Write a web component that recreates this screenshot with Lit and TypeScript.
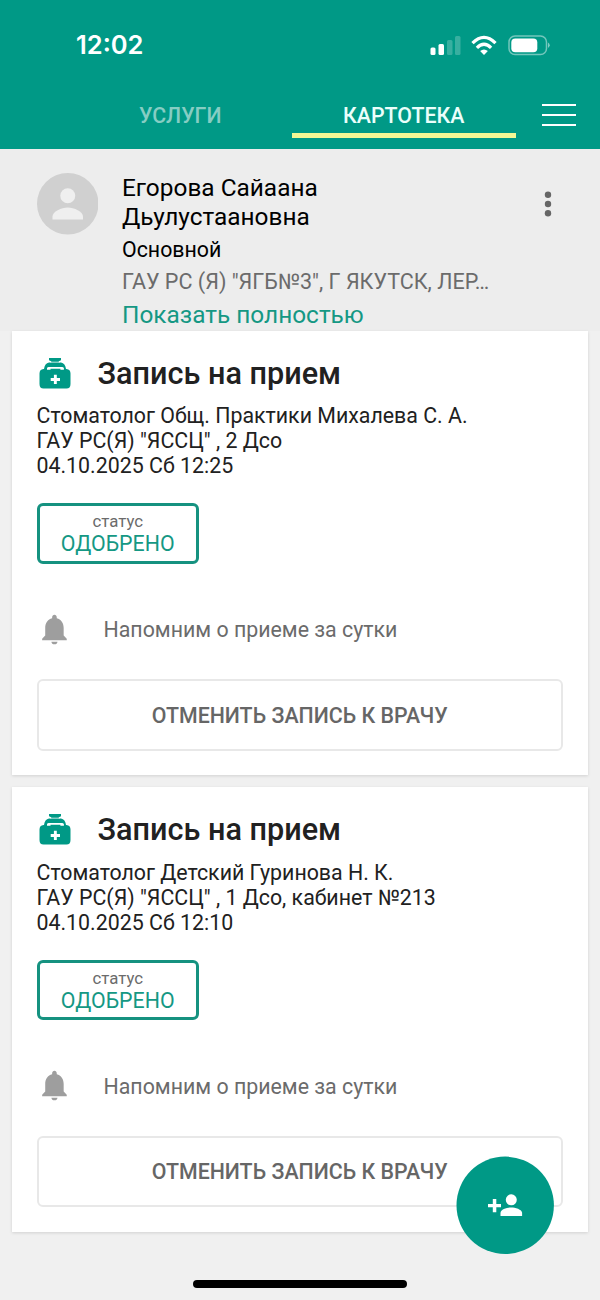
import { LitElement, html, css } from "lit";
import { customElement, property } from "lit/decorators.js";

@customElement("visit-card")
class VisitCard extends LitElement {
  @property() doctor = "";
  @property() place = "";
  @property() time = "";
  static styles = css`
    :host { display: block; box-sizing: border-box; height: 444.3px; padding: 24px 24.5px 0; background: #fff; box-shadow: 0 1px 3px rgba(0,0,0,.13); color: #212121; font-size: 21.35px; }
    .head { display: flex; align-items: center; height: 36px; gap: 25px; }
    .kit { display: block; width: 36px; height: 36px; fill: #009986; }
    .title { padding-top: 2px; font-size: 30.6px; font-weight: 500; line-height: 36px; white-space: nowrap; }
    .details { margin-top: 12.3px; line-height: 25px; white-space: nowrap; }
    .status { display: flex; flex-direction: column; align-items: center; box-sizing: border-box; width: 162.5px; height: 60.5px; margin-top: 25px; padding-top: 5px; border: 3px solid #159280; border-radius: 6px; }
    .label { font-size: 16.8px; line-height: 20px; color: #6b6b6b; }
    .value { line-height: 25px; color: #159884; }
    .remind { display: flex; align-items: center; gap: 49px; height: 36px; margin-top: 48.2px; color: #6b6b6b; white-space: nowrap; }
    .bell { display: block; width: 36.9px; height: 36.9px; fill: #9e9e9e; margin: -1.5px -18.4px 0 -0.5px; }
    .cancel { display: flex; align-items: center; justify-content: center; box-sizing: border-box; width: 526.5px; height: 71.5px; margin-top: 31.5px; padding: 0; border: 2px solid #e8e8e8; border-radius: 6px; background: none; color: #666; font: 500 21.35px Roboto, sans-serif; }
  `;
  render() {
    return html`
      <div class="head">
        <svg class="kit" viewBox="0 0 36 36"><path d="M12 3h12v2.300l-2.200 1v1.300h2.200q4.300.9 5 6.400h.5q4 .3 4 4.500v10.500q0 4.500-4 4.500H6.500q-4 0-4-4.500V18.500q0-4.200 4-4.500h.5q.7-5.500 5-6.400h2.200V6.300L12 5.300z"/><path fill="#fff" d="M13.300 6.700h9.500v.8h-9.500zM10 13.200q.3-1.300 1.800-1.300h13.200q1.500 0 1.900 1.300v1.500h-3.500v-.9H13.500v.9H10zM16.900 19.800h2.900v3.200H23v2.900h-3.200v3.200h-2.900v-3.200h-3.200V23h3.200z"/></svg>
        <div class="title">Запись на прием</div>
      </div>
      <div class="details">
        <div>${this.doctor}</div><div>${this.place}</div><div>${this.time}</div>
      </div>
      <div class="status"><span class="label">статус</span><span class="value">ОДОБРЕНО</span></div>
      <div class="remind">
        <svg class="bell" viewBox="0 0 24 24"><path d="M12 21.700c1.100 0 1.900-.7 2-1.700h-4c.1 1 .9 1.700 2 1.700zM18 16v-5c0-3.070-1.640-5.640-4.500-6.320V4c0-.83-.67-1.500-1.500-1.500s-1.500.67-1.500 1.500v.68C7.630 5.360 6 7.920 6 11v5l-2 2v1h16v-1z"/></svg>
        <span class="remind-text">Напомним о приеме за сутки</span>
      </div>
      <button class="cancel">ОТМЕНИТЬ ЗАПИСЬ К ВРАЧУ</button>
    `;
  }
}

@customElement("app-root")
class AppRoot extends LitElement {
  static styles = css`
    :host { display: block; position: relative; width: 600px; height: 1300px; overflow: hidden; background: #f0f0f0; font-family: Roboto, sans-serif; color: #000; }
    .top { height: 149.300px; background: #009986; }
    .statusbar { display: flex; align-items: center; justify-content: space-between; height: 89px; padding: 0 49px 0 76px; box-sizing: border-box; }
    .clock { color: #fff; font: 600 25.5px/30px Inter, sans-serif; }
    .signals { display: block; width: 121px; height: 22px; }
    .nav { display: flex; align-items: flex-start; }
    .tab { box-sizing: border-box; width: 223.500px; height: 49px; padding-top: 14px; text-align: center; font-size: 21.35px; font-weight: 500; line-height: 25px; color: #86cdc3; }
    .first { margin-left: 68.500px; }
    .active { color: #eafffb; border-bottom: 5px solid #f3f795; }
    .menu { display: block; width: 34px; height: 24px; margin: 14px 0 0 26.500px; }
    .profile { display: flex; height: 181.700px; padding: 24px 48px 0 36.500px; box-sizing: border-box; background: #ededed; }
    .avatar { display: block; width: 61.500px; height: 61.500px; margin-right: 24px; }
    .info { width: 380px; padding-top: 1px; white-space: nowrap; }
    .name { font-size: 24.400px; line-height: 28.500px; }
    .main { font-size: 21.350px; line-height: 25px; margin-top: 6px; }
    .clinic { font-size: 21.540px; line-height: 25px; margin-top: 7px; color: #6b6b6b; }
    .more { font-size: 24.400px; line-height: 28px; margin-top: 6.500px; color: #159884; }
    .dots { display: block; width: 8px; height: 26px; margin: 18px 0 0 auto; }
    .cards { display: flex; flex-direction: column; gap: 12.100px; padding: 0 12px; }
    .fab { position: absolute; left: 456px; top: 1156px; width: 98px; height: 98px; }
    .home { position: absolute; left: 193px; top: 1280px; width: 214px; height: 8px; border-radius: 4px; background: #000; }
  `;
  render() {
    return html`
      <div class="top">
        <div class="statusbar">
          <span class="clock">12:02</span>
          <svg class="signals" viewBox="430 33 121 22">
            <g fill="#fff"><rect x="430.500" y="46.500" width="5" height="7.500" rx="1.500"/><rect x="438.500" y="43" width="5.500" height="11" rx="1.500"/><g opacity=".22"><rect x="447" y="39" width="5.500" height="15" rx="1.500"/><rect x="455" y="35" width="5.500" height="19" rx="1.500"/></g>
            <path d="M484 54l-3.900-3.900q3.900-3.200 7.800 0z"/></g>
            <g fill="none" stroke="#fff" stroke-width="3.300"><path d="M472.500 42.100q11.500-11.600 23 0"/><path d="M476.900 46.800q7.100-7 14.200 0"/></g>
            <rect x="509" y="35" width="37.500" height="18.500" rx="6" fill="none" stroke="#fff" stroke-opacity=".45" stroke-width="1.500"/>
            <rect x="511.300" y="37.500" width="26" height="13.700" rx="4" fill="#fff"/><path d="M548 41.500q3.500 2.700 0 5.400z" fill="#fff" fill-opacity=".5"/>
          </svg>
        </div>
        <div class="nav">
          <div class="tab first">УСЛУГИ</div>
          <div class="tab active">КАРТОТЕКА</div>
          <svg class="menu" viewBox="0 0 34 24"><path d="M0 2h34M0 12h34M0 22h34" stroke="#fff" stroke-width="2"/></svg>
        </div>
      </div>
      <div class="profile">
        <svg class="avatar" viewBox="0 0 61.500 61.500"><circle cx="30.750" cy="30.750" r="30.750" fill="#d0d0d0"/><circle cx="30.750" cy="22.800" r="7.500" fill="#efefef"/><path d="M15.500 46.500v-3c0-5 9-9 15.250-9s15.250 4 15.250 9v3z" fill="#efefef"/></svg>
        <div class="info">
          <div class="name">Егорова Сайаана<br>Дьулустаановна</div>
          <div class="main">Основной</div>
          <div class="clinic">ГАУ РС (Я) "ЯГБ№3", Г ЯКУТСК, ЛЕР…</div>
          <div class="more">Показать полностью</div>
        </div>
        <svg class="dots" viewBox="0 0 8 26"><g fill="#666"><circle cx="4" cy="3.700" r="3.200"/><circle cx="4" cy="13" r="3.200"/><circle cx="4" cy="22.200" r="3.200"/></g></svg>
      </div>
      <div class="cards">
        <visit-card doctor="Стоматолог Общ. Практики Михалева С. А." place='ГАУ РС(Я) "ЯССЦ" , 2 Дсо' time="04.10.2025 Сб 12:25"></visit-card>
        <visit-card doctor="Стоматолог Детский Гуринова Н. К." place='ГАУ РС(Я) "ЯССЦ" , 1 Дсо, кабинет №213' time="04.10.2025 Сб 12:10"></visit-card>
      </div>
      <svg class="fab" viewBox="0 0 98 98"><circle cx="49.200" cy="49.300" r="48.700" fill="#009986"/><g fill="#fff"><path d="M36.800 43h3.500v5h4.700v3.300h-4.700v5h-3.500v-5H32V48h4.800z"/><circle cx="55.300" cy="43.800" r="5.500"/><path d="M44.500 60v-3c0-3.700 7.200-5.500 10.800-5.500s10.800 1.800 10.800 5.500v3z"/></g></svg>
      <div class="home"></div>
    `;
  }
}
